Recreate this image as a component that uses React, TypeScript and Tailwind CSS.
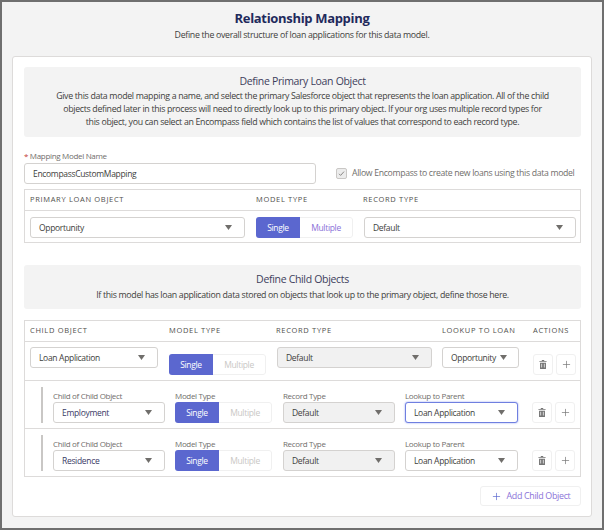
import { Plus } from "lucide-react";

function Caret() {
  return (
    <svg width="7" height="5" viewBox="0 0 7 5" className="shrink-0">
      <path d="M0 0h7L3.5 5z" fill="#706e6b" />
    </svg>
  );
}

function TrashIcon() {
  return (
    <svg width="8" height="9" viewBox="0 0 10 11">
      <path d="M3.5 0h3v1H9.5v1.2H.5V1h3z" fill="#757575" />
      <path
        fillRule="evenodd"
        d="M1.3 3.2h7.4V11H1.3zM3 4.6v4.8h.9V4.6zm3.1 0v4.8H7V4.6z"
        fill="#757575"
      />
    </svg>
  );
}

function Select({
  value,
  width,
  disabled,
  focused,
  tinted,
}: {
  value: string;
  width: string;
  disabled?: boolean;
  focused?: boolean;
  tinted?: boolean;
}) {
  return (
    <div
      className={`${width} flex h-[21px] shrink-0 items-center justify-between rounded-[3px] border pl-[8px] pr-[12px] text-[8.5px] ${
        tinted ? "text-[#3a3a66]" : "text-[#3e3e3c]"
      } ${disabled ? "border-[#d4d2d0] bg-[#f1f1f1]" : "bg-white"} ${
        focused ? "border-[#6f7fe0] shadow-[0_0_2px_#8c9cf0]" : disabled ? "" : "border-[#d4d2d0]"
      }`}
    >
      <span className="pt-[1px]">{value}</span>
      <Caret />
    </div>
  );
}

function ModelToggle({ light }: { light?: boolean }) {
  return (
    <div className="flex h-[21px] w-[97px] shrink-0 overflow-hidden rounded-[3px] text-[8.5px]">
      <div className="flex w-[44px] items-center justify-center bg-[#5b67cf] pt-[1px] text-white">Single</div>
      <div
        className={`flex flex-1 items-center justify-center rounded-r-[3px] border border-l-0 border-[#f0f0f0] bg-white pt-[1px] ${
          light ? "text-[#c9c7c5]" : "text-[#8a72d8]"
        }`}
      >
        Multiple
      </div>
    </div>
  );
}

function Actions() {
  return (
    <div className="flex shrink-0 gap-[3px]">
      <div className="flex h-[21px] w-[20px] items-center justify-center rounded-[3px] border border-[#f0f0f0]">
        <TrashIcon />
      </div>
      <div className="flex h-[21px] w-[20px] items-center justify-center rounded-[3px] border border-[#f0f0f0]">
        <Plus size={11} strokeWidth={1.5} className="text-[#757575]" />
      </div>
    </div>
  );
}

function HeaderCell({ label, width }: { label: string; width: string }) {
  return (
    <div className={`${width} shrink-0 text-[7.5px] tracking-[0.09em] text-[#514f4d]`}>{label}</div>
  );
}

function FieldLabel({ text }: { text: string }) {
  return <span className="mb-[1px] h-[12px] text-[8px] leading-[14px] text-[#706e6b]">{text}</span>;
}

function ChildRow({ value, focused, last }: { value: string; focused?: boolean; last?: boolean }) {
  return (
    <div className={`flex items-start pl-[16px] pt-[6px] ${last ? "h-[47px]" : "h-[48px] border-b border-[#dddbda]"}`}>
      <div className="mr-[10px] h-[36px] w-[2px] shrink-0 bg-[#c9c7c5]" />
      <div className="flex items-end pt-[2px]">
        <div className="mr-[10px] flex flex-col">
          <FieldLabel text="Child of Child Object" />
          <Select value={value} width="w-[112px]" tinted />
        </div>
        <div className="mr-[11px] flex flex-col">
          <FieldLabel text="Model Type" />
          <ModelToggle light />
        </div>
        <div className="mr-[10px] flex flex-col">
          <FieldLabel text="Record Type" />
          <Select value="Default" width="w-[112px]" disabled />
        </div>
        <div className="mr-[14px] flex flex-col">
          <FieldLabel text="Lookup to Parent" />
          <Select value="Loan Application" width="w-[113px]" focused={focused} />
        </div>
        <Actions />
      </div>
    </div>
  );
}

export default function App() {
  return (
    <div
      className="flex h-[530px] w-[604px] flex-col overflow-hidden border-2 border-[#6f6f6f] bg-[#f3f3f3] tracking-[-0.02em] text-[#3e3e3c]"
      style={{ fontFamily: '"Open Sans", "Noto Sans", sans-serif' }}
    >
      <div className="flex h-[54px] shrink-0 flex-col items-center pt-[7px]">
        <h1 className="text-[13px] font-bold leading-[18px] text-[#1f2a5c]">Relationship Mapping</h1>
        <p className="mt-[2px] text-[8.8px] leading-[12px] text-[#3e3e3c]">
          Define the overall structure of loan applications for this data model.
        </p>
      </div>

      <div className="mx-[10px] flex h-[461px] flex-col rounded-[3px] border border-[#dddbda] bg-white pl-[11px] pr-[10px] pt-[10px]">
        <section className="flex h-[70px] shrink-0 flex-col items-center rounded-[3px] bg-[#f3f3f3] pt-[7px] text-center">
          <h2 className="text-[10.5px] leading-[15px] text-[#3e3e5c]">Define Primary Loan Object</h2>
          <p className="mt-[1px] w-[494px] text-[8.8px] leading-[13px] text-[#3e3e3c]">
            Give this data model mapping a name, and select the primary Salesforce object that represents the loan
            application. All of the child objects defined later in this process will need to directly look up to this
            primary object. If your org uses multiple record types for this object, you can select an Encompass field
            which contains the list of values that correspond to each record type.
          </p>
        </section>

        <div className="mt-[13px] h-[12px] text-[8px] leading-[12px] text-[#706e6b]">
          <span className="text-[#c23934]">*</span> Mapping Model Name
        </div>
        <div className="mt-[1px] flex h-[21px] shrink-0 items-center">
          <div className="flex h-[21px] w-[292px] items-center rounded-[3px] border border-[#d4d2d0] px-[8px] pt-[1px] text-[8.5px]">
            EncompassCustomMapping
          </div>
          <div className="ml-[20px] flex items-center gap-[5px] text-[8.7px] text-[#706e6b]">
            <div className="flex h-[11px] w-[11px] items-center justify-center rounded-[2px] border border-[#c9c7c5] bg-[#ececec]">
              <svg width="7" height="7" viewBox="0 0 7 7">
                <path d="M1 3.8l1.6 1.6L6 1.6" fill="none" stroke="#8a8886" strokeWidth="1" />
              </svg>
            </div>
            <span className="pt-[1px]">Allow Encompass to create new loans using this data model</span>
          </div>
        </div>

        <div className="mt-[5px] h-[54px] shrink-0 border border-[#dddbda]">
          <div className="flex h-[21px] items-center border-b border-[#dddbda] pl-[5px]">
            <HeaderCell label="PRIMARY LOAN OBJECT" width="w-[226px]" />
            <HeaderCell label="MODEL TYPE" width="w-[107px]" />
            <HeaderCell label="RECORD TYPE" width="w-[200px]" />
          </div>
          <div className="flex items-center pl-[5px] pt-[6px]">
            <Select value="Opportunity" width="w-[215px]" />
            <div className="ml-[11px]">
              <ModelToggle />
            </div>
            <div className="ml-[11px]">
              <Select value="Default" width="w-[212px]" />
            </div>
          </div>
        </div>

        <section className="mt-[22px] flex h-[44px] shrink-0 flex-col items-center rounded-[3px] bg-[#f3f3f3] pt-[7px] text-center">
          <h2 className="text-[10.5px] leading-[15px] text-[#3e3e5c]">Define Child Objects</h2>
          <p className="mt-[2px] text-[8.8px] leading-[12px] text-[#3e3e3c]">
            If this model has loan application data stored on objects that look up to the primary object, define those here.
          </p>
        </section>

        <div className="mt-[11px] shrink-0 border border-[#dddbda]">
          <div className="flex h-[21px] items-center border-b border-[#dddbda] pl-[5px]">
            <HeaderCell label="CHILD OBJECT" width="w-[139px]" />
            <HeaderCell label="MODEL TYPE" width="w-[107px]" />
            <HeaderCell label="RECORD TYPE" width="w-[166px]" />
            <HeaderCell label="LOOKUP TO LOAN" width="w-[91px]" />
            <HeaderCell label="ACTIONS" width="w-[40px]" />
          </div>
          <div className="flex h-[39px] items-start border-b border-[#dddbda] pl-[5px] pt-[5px]">
            <Select value="Loan Application" width="w-[128px]" />
            <div className="ml-[11px] mt-[7px]">
              <ModelToggle light />
            </div>
            <div className="ml-[11px]">
              <Select value="Default" width="w-[155px]" disabled />
            </div>
            <div className="ml-[10px] flex h-[21px] w-[77px] shrink-0 items-center gap-[4px] rounded-[3px] border border-[#d4d2d0] pl-[8px] text-[8.5px]">
              <span className="pt-[1px]">Opportunity</span>
              <Caret />
            </div>
            <div className="ml-[14px] mt-[7px]">
              <Actions />
            </div>
          </div>
          <ChildRow value="Employment" focused />
          <ChildRow value="Residence" last />
        </div>

        <div className="mt-[9px] flex justify-end">
          <button className="flex h-[20px] w-[101px] items-center justify-center gap-[5px] rounded-[3px] border border-[#f0f0f0] bg-white text-[8.9px] text-[#8a72d8]">
            <Plus size={11} strokeWidth={1.5} className="text-[#5b67cf]" />
            Add Child Object
          </button>
        </div>
      </div>
    </div>
  );
}
